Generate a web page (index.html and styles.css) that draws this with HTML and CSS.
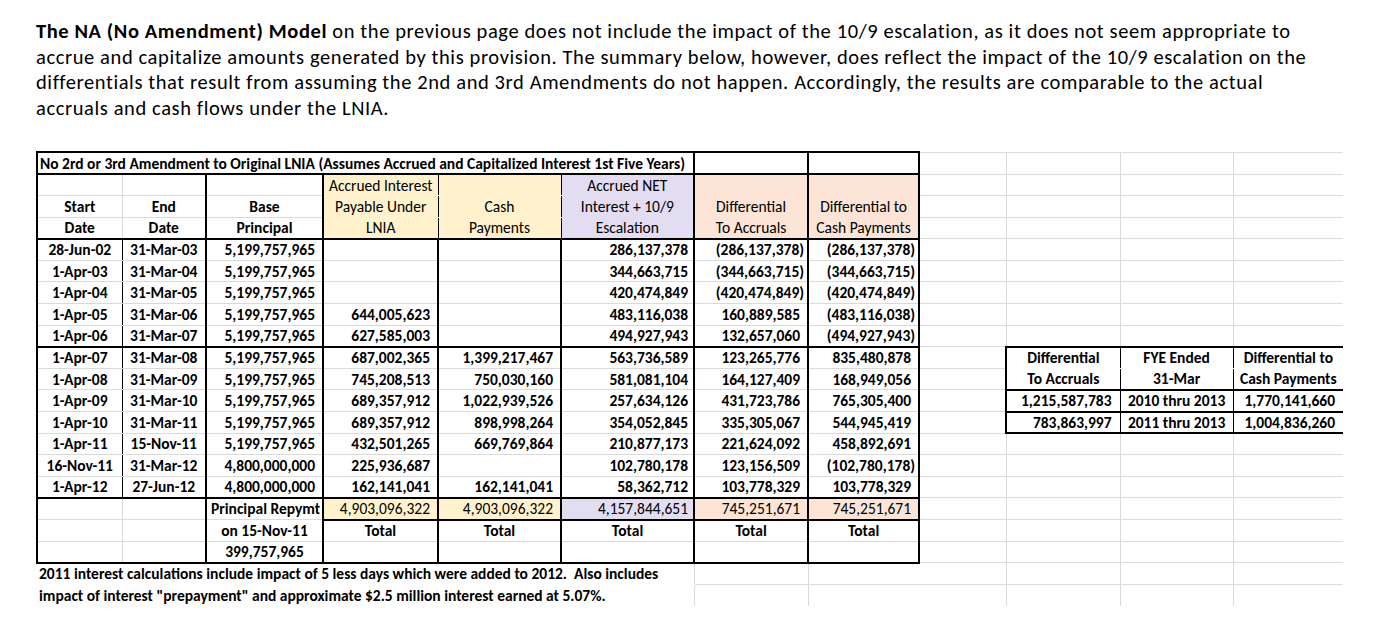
FILE: index.html
```html
<!DOCTYPE html>
<html lang="en">
<head>
<meta charset="utf-8">
<title>NA Model Summary</title>
<link rel="stylesheet" href="styles.css">
</head>
<body>
<div class="page">
<p class="intro"><strong>The NA (No Amendment) Model</strong> on the previous page does not include the impact of the 10/9 escalation, as it does not seem appropriate to<br>accrue and capitalize amounts generated by this provision. The summary below, however, does reflect the impact of the 10/9 escalation on the<br>differentials that result from assuming the 2nd and 3rd Amendments do not happen. Accordingly, the results are comparable to the actual<br>accruals and cash flows under the LNIA.</p>

<table class="sheet">
<colgroup>
<col class="w1"><col class="w2"><col class="w3"><col class="w4"><col class="w5"><col class="w6"><col class="w7"><col class="w8"><col class="w9"><col class="w10"><col class="w11"><col class="w12">
</colgroup>
<tr class="rt">
<td colspan="6" class="title L T B R">No 2rd or 3rd Amendment to Original LNIA (Assumes Accrued and Capitalized Interest 1st Five Years)</td>
<td class="T B R"></td><td class="T B R"></td>
<td></td><td></td><td></td><td class="e"></td>
</tr>
<tr class="hd">
<td class="L"></td><td class="R"></td><td class="R"></td>
<td class="y r1 fy">Accrued Interest</td><td class="y r1 fy"></td><td class="v R fv">Accrued NET</td><td class="p R fp"></td><td class="p R fp"></td>
<td></td><td></td><td></td><td class="e"></td>
</tr>
<tr class="hd">
<td class="L bo">Start</td><td class="R bo">End</td><td class="R bo">Base</td>
<td class="y r1 fy">Payable Under</td><td class="y r1 fy">Cash</td><td class="v R fv">Interest + 10/9</td><td class="p R fp">Differential</td><td class="p R fp">Differential to</td>
<td></td><td></td><td></td><td class="e"></td>
</tr>
<tr class="hd">
<td class="L B bo">Date</td><td class="R B bo">Date</td><td class="R B bo">Principal</td>
<td class="y r1 B">LNIA</td><td class="y r1 B">Payments</td><td class="v R B">Escalation</td><td class="p R B">To Accruals</td><td class="p R B">Cash Payments</td>
<td></td><td></td><td></td><td class="e"></td>
</tr>
<tr class="d">
<td class="L r1">28-Jun-02</td><td class="R">31-Mar-03</td><td class="n R">5,199,757,965</td><td class="n R"></td><td class="n R"></td><td class="nn R">286,137,378</td><td class="ng R">(286,137,378)</td><td class="ng R">(286,137,378)</td>
<td></td><td></td><td></td><td class="e"></td>
</tr>
<tr class="d">
<td class="L r1">1-Apr-03</td><td class="R">31-Mar-04</td><td class="n R">5,199,757,965</td><td class="n R"></td><td class="n R"></td><td class="nn R">344,663,715</td><td class="ng R">(344,663,715)</td><td class="ng R">(344,663,715)</td>
<td></td><td></td><td></td><td class="e"></td>
</tr>
<tr class="d">
<td class="L r1">1-Apr-04</td><td class="R">31-Mar-05</td><td class="n R">5,199,757,965</td><td class="n R"></td><td class="n R"></td><td class="nn R">420,474,849</td><td class="ng R">(420,474,849)</td><td class="ng R">(420,474,849)</td>
<td></td><td></td><td></td><td class="e"></td>
</tr>
<tr class="d">
<td class="L r1">1-Apr-05</td><td class="R">31-Mar-06</td><td class="n R">5,199,757,965</td><td class="n R">644,005,623</td><td class="n R"></td><td class="nn R">483,116,038</td><td class="n R">160,889,585</td><td class="ng R">(483,116,038)</td>
<td></td><td></td><td></td><td class="e"></td>
</tr>
<tr class="d">
<td class="L r1 B">1-Apr-06</td><td class="R B">31-Mar-07</td><td class="n R B">5,199,757,965</td><td class="n R B">627,585,003</td><td class="n R B"></td><td class="nn R B">494,927,943</td><td class="n R B">132,657,060</td><td class="ng R B">(494,927,943)</td>
<td></td><td></td><td></td><td class="e"></td>
</tr>
<tr class="d">
<td class="L r1">1-Apr-07</td><td class="R">31-Mar-08</td><td class="n R">5,199,757,965</td><td class="n R">687,002,365</td><td class="n R">1,399,217,467</td><td class="nn R">563,736,589</td><td class="n R">123,265,776</td><td class="n R">835,480,878</td>
<td></td><td class="Lk r1 T sh">Differential</td><td class="r1 T sh">FYE Ended</td><td class="e T sh">Differential to</td>
</tr>
<tr class="d">
<td class="L r1">1-Apr-08</td><td class="R">31-Mar-09</td><td class="n R">5,199,757,965</td><td class="n R">745,208,513</td><td class="n R">750,030,160</td><td class="nn R">581,081,104</td><td class="n R">164,127,409</td><td class="n R">168,949,056</td>
<td></td><td class="Lk r1 B">To Accruals</td><td class="r1 B">31-Mar</td><td class="e B">Cash Payments</td>
</tr>
<tr class="d">
<td class="L r1">1-Apr-09</td><td class="R">31-Mar-10</td><td class="n R">5,199,757,965</td><td class="n R">689,357,912</td><td class="n R">1,022,939,526</td><td class="nn R">257,634,126</td><td class="n R">431,723,786</td><td class="n R">765,305,400</td>
<td></td><td class="Lk r1 B ns">1,215,587,783</td><td class="r1 B">2010 thru 2013</td><td class="e B ns">1,770,141,660</td>
</tr>
<tr class="d">
<td class="L r1">1-Apr-10</td><td class="R">31-Mar-11</td><td class="n R">5,199,757,965</td><td class="n R">689,357,912</td><td class="n R">898,998,264</td><td class="nn R">354,052,845</td><td class="n R">335,305,067</td><td class="n R">544,945,419</td>
<td></td><td class="Lk r1 B ns">783,863,997</td><td class="r1 B">2011 thru 2013</td><td class="e B ns">1,004,836,260</td>
</tr>
<tr class="d">
<td class="L r1">1-Apr-11</td><td class="R">15-Nov-11</td><td class="n R">5,199,757,965</td><td class="n R">432,501,265</td><td class="n R">669,769,864</td><td class="nn R">210,877,173</td><td class="n R">221,624,092</td><td class="n R">458,892,691</td>
<td></td><td></td><td></td><td class="e"></td>
</tr>
<tr class="d">
<td class="L r1">16-Nov-11</td><td class="R">31-Mar-12</td><td class="n R">4,800,000,000</td><td class="n R">225,936,687</td><td class="n R"></td><td class="nn R">102,780,178</td><td class="n R">123,156,509</td><td class="ng R">(102,780,178)</td>
<td></td><td></td><td></td><td class="e"></td>
</tr>
<tr class="d">
<td class="L r1 B">1-Apr-12</td><td class="R B">27-Jun-12</td><td class="n R B">4,800,000,000</td><td class="n R B">162,141,041</td><td class="n R B">162,141,041</td><td class="nn R B">58,362,712</td><td class="n R B">103,778,329</td><td class="n R B">103,778,329</td>
<td></td><td></td><td></td><td class="e"></td>
</tr>
<tr class="tot">
<td class="L"></td><td class="R"></td><td class="R bo">Principal Repymt</td>
<td class="y n R B">4,903,096,322</td><td class="y n R B">4,903,096,322</td><td class="v nn R B">4,157,844,651</td><td class="p n R B">745,251,671</td><td class="p n R B">745,251,671</td>
<td></td><td></td><td></td><td class="e"></td>
</tr>
<tr class="tot">
<td class="L"></td><td class="R"></td><td class="R bo">on 15-Nov-11</td>
<td class="R bo">Total</td><td class="R bo">Total</td><td class="R bo">Total</td><td class="R bo">Total</td><td class="R bo">Total</td>
<td></td><td></td><td></td><td class="e"></td>
</tr>
<tr class="tot">
<td class="L B"></td><td class="R B"></td><td class="R B bo">399,757,965</td>
<td class="R B"></td><td class="R B"></td><td class="R B"></td><td class="R B"></td><td class="R B"></td>
<td></td><td></td><td></td><td class="e"></td>
</tr>
<tr class="nt">
<td colspan="6" class="note">2011 interest calculations include impact of 5 less days which were added to 2012.&nbsp; Also includes</td>
<td></td><td class="nr"></td><td></td><td></td><td></td><td class="e"></td>
</tr>
<tr class="nt last">
<td colspan="6" class="note">impact of interest "prepayment" and approximate $2.5 million interest earned at 5.07%.</td>
<td></td><td class="nr"></td><td></td><td></td><td></td><td class="e"></td>
</tr>
</table>
</div>
</body>
</html>
```

FILE: styles.css
```css
* { box-sizing: border-box; }

body {
  margin: 0;
  background: #fff;
  color: #000;
  font-family: Carlito, Lato, "Liberation Sans", sans-serif;
}

.page {
  padding: 19px 0 0 36px;
}

.intro {
  margin: 0;
  font-size: 20.5px;
  line-height: 25.5px;
  letter-spacing: 0.6px;
  white-space: nowrap;
}

.sheet {
  margin-top: 30px;
  border-collapse: collapse;
  table-layout: fixed;
  width: 1306px;
  font-size: 15.5px;
}

.w1 { width: 85px; }
.w2 { width: 84px; }
.w3 { width: 117px; }
.w4 { width: 115px; }
.w5 { width: 123px; }
.w6 { width: 133px; }
.w7 { width: 114px; }
.w8 { width: 111px; }
.w9 { width: 87px; }
.w10 { width: 114px; }
.w11 { width: 113px; }
.w12 { width: 110px; }

.sheet tr { height: 21.6px; }
.sheet tr.rt { height: 22px; }

.sheet td {
  border: 1px solid #dadada;
  padding: 1px 4px 0;
  white-space: nowrap;
  line-height: 18px;
  vertical-align: middle;
  text-align: center;
  overflow: hidden;
}

.title {
  font-weight: bold;
  text-align: left !important;
  padding-left: 2px !important;
}

.bo { font-weight: bold; }
.d td { font-weight: bold; }

/* fills */
.y { background: #fff2cc; }
.v { background: #e2ddf1; }
.p { background: #fce4d6; }
.fy { border-bottom: 1px solid #fff2cc !important; }
.fv { border-bottom: 1px solid #e2ddf1 !important; }
.fp { border-bottom: 1px solid #fce4d6 !important; }

/* numbers */
.sheet td.n { text-align: right; padding-right: 7px; }
.sheet td.nn { text-align: right; padding-right: 5px; }
.sheet td.ng { text-align: right; padding-right: 3px; }
.sheet td.ns { text-align: right; padding-right: 8px; }

/* borders */
.sheet td.r1 { border-right: 1px solid #000; }
.sheet td.L { border-left: 2px solid #000; }
.sheet td.Lk { border-left: 2px solid #000; }
.sheet td.R { border-right: 2px solid #000; }
.sheet td.T { border-top: 2px solid #000; }
.sheet td.B { border-bottom: 2px solid #000; }
.sheet td.e { border-right: none; }

/* summary header without inner line */
.sheet td.sh { border-bottom: 1px solid #fff; }

/* notes */
.sheet td.note {
  text-align: left;
  font-weight: bold;
  padding-left: 2px;
  border-left: none;
  border-bottom: 1px solid #fff;
  overflow: visible;
}
.sheet td.nr { border-right: 1px solid #fff; }
.sheet tr.last td { border-bottom: none; }
```
